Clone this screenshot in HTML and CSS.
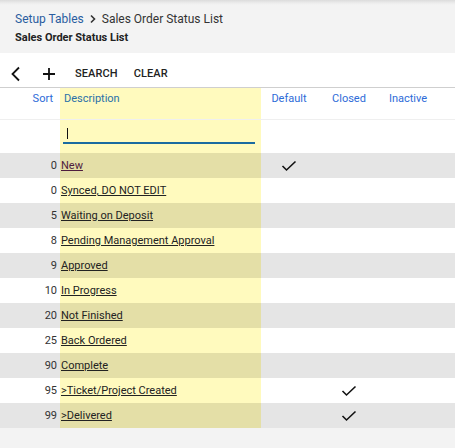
FILE: index.html
```html
<!DOCTYPE html>
<html>
<head>
<meta charset="utf-8">
<link rel="stylesheet" href="styles.css">
</head>
<body>
<div class="page">
  <header class="head">
    <div class="crumbs">
      <span class="crumb-link">Setup Tables</span>
      <svg class="crumb-sep" width="8" height="10" viewBox="0 0 8 10"><path d="M2 1.5 L5.5 5 L2 8.5" fill="none" stroke="#333" stroke-width="1.6"/></svg>
      <span class="crumb-cur">Sales Order Status List</span>
    </div>
    <div class="title">Sales Order Status List</div>
  </header>
  <div class="toolbar">
    <svg class="tb-icon back" width="14" height="16" viewBox="0 0 14 16"><path d="M10 1.5 L3.5 8 L10 14.5" fill="none" stroke="#111" stroke-width="1.8"/></svg>
    <svg class="tb-icon plus" width="14" height="14" viewBox="0 0 14 14"><path d="M7 1 V13 M1 7 H13" fill="none" stroke="#111" stroke-width="1.8"/></svg>
    <span class="tb-btn">SEARCH</span>
    <span class="tb-btn">CLEAR</span>
  </div>
  <div class="grid">
    <div class="row hdr">
      <div class="c sort">Sort</div>
      <div class="c desc">Description</div>
      <div class="c chk">Default</div>
      <div class="c chk">Closed</div>
      <div class="c chk">Inactive</div>
      <div class="c fill"></div>
    </div>
    <div class="row filter">
      <div class="c sort"></div>
      <div class="c desc"><div class="input"><span class="caret"></span></div></div>
      <div class="c chk"></div>
      <div class="c chk"></div>
      <div class="c chk"></div>
      <div class="c fill"></div>
    </div>
    <div class="row odd">
      <div class="c sort">0</div><div class="c desc"><a class="lnk visited">New</a></div>
      <div class="c chk"><svg class="tick" width="16" height="12" viewBox="0 0 16 12"><path d="M1.5 6 L5.5 10 L14.5 1.5" fill="none" stroke="#111" stroke-width="1.6"/></svg></div>
      <div class="c chk"></div><div class="c chk"></div><div class="c fill"></div>
    </div>
    <div class="row">
      <div class="c sort">0</div><div class="c desc"><a class="lnk">Synced, DO NOT EDIT</a></div>
      <div class="c chk"></div><div class="c chk"></div><div class="c chk"></div><div class="c fill"></div>
    </div>
    <div class="row odd">
      <div class="c sort">5</div><div class="c desc"><a class="lnk">Waiting on Deposit</a></div>
      <div class="c chk"></div><div class="c chk"></div><div class="c chk"></div><div class="c fill"></div>
    </div>
    <div class="row">
      <div class="c sort">8</div><div class="c desc"><a class="lnk">Pending Management Approval</a></div>
      <div class="c chk"></div><div class="c chk"></div><div class="c chk"></div><div class="c fill"></div>
    </div>
    <div class="row odd">
      <div class="c sort">9</div><div class="c desc"><a class="lnk">Approved</a></div>
      <div class="c chk"></div><div class="c chk"></div><div class="c chk"></div><div class="c fill"></div>
    </div>
    <div class="row">
      <div class="c sort">10</div><div class="c desc"><a class="lnk">In Progress</a></div>
      <div class="c chk"></div><div class="c chk"></div><div class="c chk"></div><div class="c fill"></div>
    </div>
    <div class="row odd">
      <div class="c sort">20</div><div class="c desc"><a class="lnk">Not Finished</a></div>
      <div class="c chk"></div><div class="c chk"></div><div class="c chk"></div><div class="c fill"></div>
    </div>
    <div class="row">
      <div class="c sort">25</div><div class="c desc"><a class="lnk">Back Ordered</a></div>
      <div class="c chk"></div><div class="c chk"></div><div class="c chk"></div><div class="c fill"></div>
    </div>
    <div class="row odd">
      <div class="c sort">90</div><div class="c desc"><a class="lnk">Complete</a></div>
      <div class="c chk"></div><div class="c chk"></div><div class="c chk"></div><div class="c fill"></div>
    </div>
    <div class="row">
      <div class="c sort">95</div><div class="c desc"><a class="lnk">&gt;Ticket/Project Created</a></div>
      <div class="c chk"></div>
      <div class="c chk"><svg class="tick" width="16" height="12" viewBox="0 0 16 12"><path d="M1.5 6 L5.5 10 L14.5 1.5" fill="none" stroke="#111" stroke-width="1.6"/></svg></div>
      <div class="c chk"></div><div class="c fill"></div>
    </div>
    <div class="row odd">
      <div class="c sort">99</div><div class="c desc"><a class="lnk">&gt;Delivered</a></div>
      <div class="c chk"></div>
      <div class="c chk"><svg class="tick" width="16" height="12" viewBox="0 0 16 12"><path d="M1.5 6 L5.5 10 L14.5 1.5" fill="none" stroke="#111" stroke-width="1.6"/></svg></div>
      <div class="c chk"></div><div class="c fill"></div>
    </div>
  </div>
  <div class="rest"></div>
</div>
</body>
</html>
```

FILE: styles.css
```css
* { box-sizing: border-box; }
html, body { margin: 0; padding: 0; }
body {
  font-family: Roboto, "Liberation Sans", sans-serif;
  background: #f3f3f3;
  color: #222;
  width: 455px;
  height: 448px;
  overflow: hidden;
}
.page { display: flex; flex-direction: column; height: 448px; }
.head {
  height: 53px;
  background: linear-gradient(#dcdcdc 0, #ececec 3px, #f3f3f3 5px);
  padding: 11px 0 0 15px;
}
.crumbs { display: flex; align-items: center; font-size: 12px; height: 15px; }
.crumb-link { color: #2a5d9f; }
.crumb-sep { margin: 0 5px 0 5px; }
.crumb-cur { color: #333; }
.title { font-size: 11px; font-weight: 700; color: #222; margin-top: 5px; }
.toolbar {
  background: #fff;
  height: 35px;
  border-bottom: 1px solid #cfcfcf;
  display: flex;
  align-items: center;
  padding: 7px 0 0 9px;
}
.tb-icon { flex: none; }
.back { margin-right: 19px; margin-top: 1px; }
.plus { margin-right: 19px; margin-top: 1px; }
.tb-btn { font-size: 11px; font-weight: 500; color: #222; margin-right: 16px; letter-spacing: 0.1px; }
.grid { background: #fff; }
.row {
  display: grid;
  grid-template-columns: 60px 201px 56px 64px 54px 1fr;
  height: 25px;
}
.row.odd { background: #e5e5e5; }
.c { display: flex; align-items: center; font-size: 11px; }
.sort { justify-content: flex-end; padding-right: 3px; color: #333; }
.desc { background: #fffabe; padding-left: 1px; }
.row.odd .desc { background: #e4dfa7; }
.chk { justify-content: center; }
.hdr { height: 32px; border-bottom: 1px solid #efefef; align-items: stretch; }
.hdr .c { color: #2d6bd8; align-items: flex-start; padding-top: 4px; }
.hdr .sort { padding-right: 7px; }
.hdr .desc { color: #2a70a8; padding-left: 4px; }
.filter { height: 33px; }
.filter .desc { align-items: flex-start; padding: 6px 6px 0 3px; }
.input {
  width: 192px;
  height: 18px;
  border-bottom: 2px solid #1a6ba0;
  position: relative;
}
.caret { position: absolute; left: 4px; top: 2px; width: 1px; height: 11px; background: #111; }
.lnk { color: #222; text-decoration: underline; text-underline-offset: 1px; }
.lnk.visited { color: #4e1d3e; }
.tick { display: block; }
.rest { flex: 1; background: #f3f3f3; }
```
